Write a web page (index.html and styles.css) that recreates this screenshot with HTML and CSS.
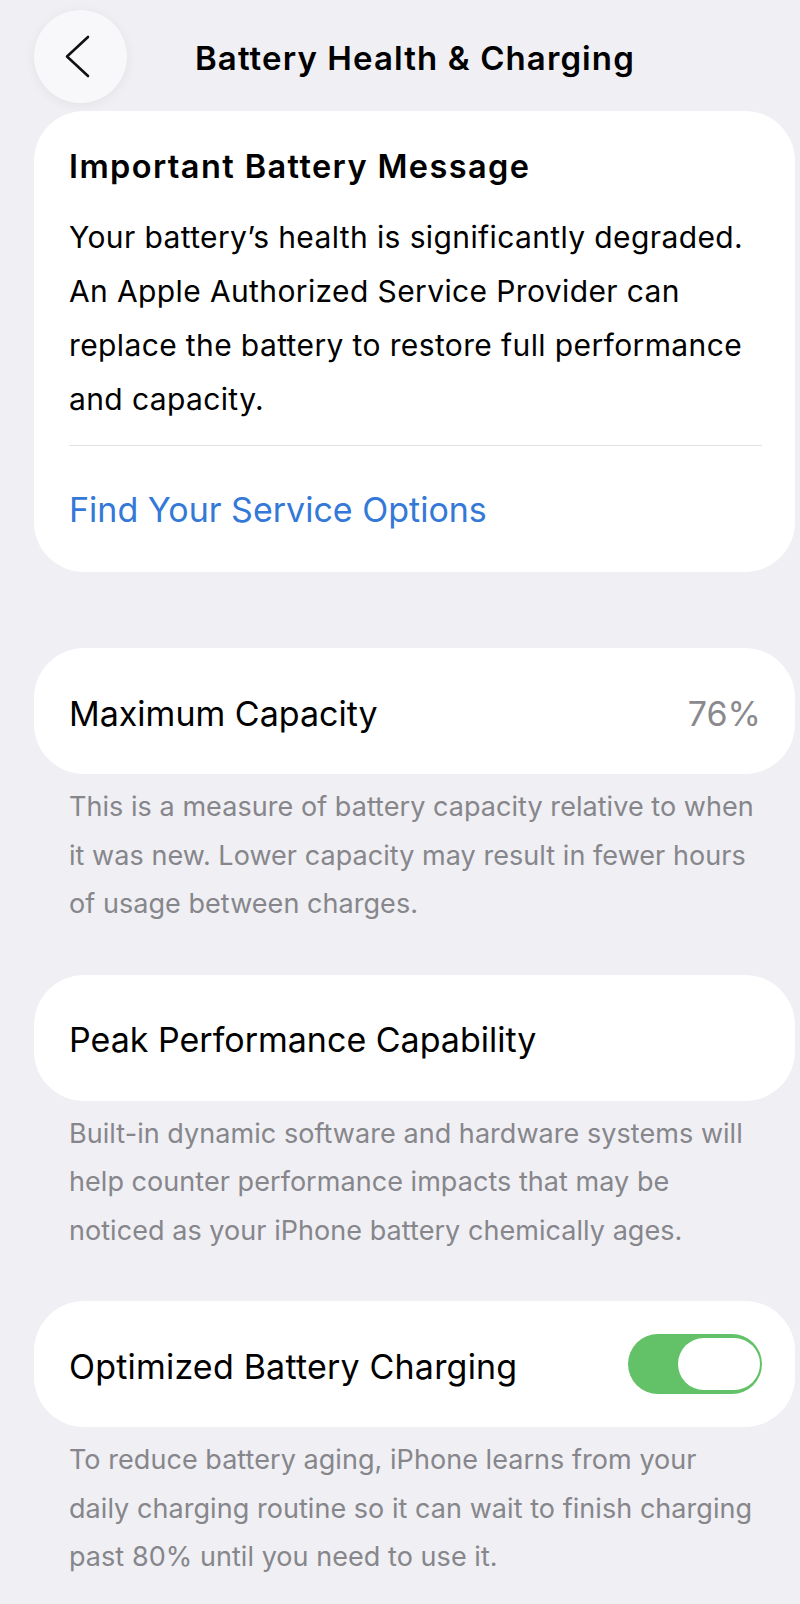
FILE: index.html
```html
<!DOCTYPE html>
<html lang="en">
<head>
<meta charset="utf-8">
<title>Battery Health &amp; Charging</title>
<link rel="stylesheet" href="styles.css">
</head>
<body>
<div class="page">
  <header class="nav">
    <div class="back">
      <svg width="93" height="93" viewBox="0 0 93 93" aria-hidden="true">
        <polyline points="54,27 33,46.5 54,66" fill="none" stroke="#111" stroke-width="2.6" stroke-linecap="round" stroke-linejoin="round"/>
      </svg>
    </div>
    <h1 class="nav-title">Battery Health &amp; Charging</h1>
  </header>

  <section class="card message">
    <h2 class="msg-title">Important Battery Message</h2>
    <p class="msg-body">Your battery’s health is significantly degraded.<br>An Apple Authorized Service Provider can<br>replace the battery to restore full performance<br>and capacity.</p>
    <div class="divider"></div>
    <a class="link">Find Your Service Options</a>
  </section>

  <section class="group first">
    <div class="card row">
      <span class="label">Maximum Capacity</span>
      <span class="value">76%</span>
    </div>
    <p class="footer">This is a measure of battery capacity relative to when<br>it was new. Lower capacity may result in fewer hours<br>of usage between charges.</p>
  </section>

  <section class="group">
    <div class="card row">
      <span class="label">Peak Performance Capability</span>
    </div>
    <p class="footer">Built-in dynamic software and hardware systems will<br>help counter performance impacts that may be<br>noticed as your iPhone battery chemically ages.</p>
  </section>

  <section class="group">
    <div class="card row">
      <span class="label wide">Optimized Battery Charging</span>
      <div class="toggle"><div class="knob"></div></div>
    </div>
    <p class="footer">To reduce battery aging, iPhone learns from your<br>daily charging routine so it can wait to finish charging<br>past 80% until you need to use it.</p>
  </section>
</div>
</body>
</html>
```

FILE: styles.css
```css
html, body {
  margin: 0;
  padding: 0;
  background: #efeff4;
}
body {
  font-family: Inter, "Noto Sans", "Liberation Sans", sans-serif;
  color: #000;
  -webkit-font-smoothing: antialiased;
}
.page {
  width: 800px;
  height: 1604px;
  overflow: hidden;
  display: flex;
  flex-direction: column;
}
.nav {
  display: flex;
  align-items: flex-start;
  padding: 10px 0 0 34px;
  height: 111px;
  box-sizing: border-box;
}
.back {
  width: 93px;
  height: 93px;
  border-radius: 50%;
  background: #f8f8fa;
  box-shadow: 0 2px 12px rgba(0, 0, 0, 0.06);
  flex: none;
}
.back svg { display: block; }
.nav-title {
  margin: 0 0 0 68px;
  font-size: 33px;
  font-weight: 600;
  line-height: 96px;
  letter-spacing: 1.1px;
}
.card {
  background: #fff;
  margin-left: 34px;
  width: 761px;
  box-sizing: border-box;
  border-radius: 50px;
}
.message {
  padding: 38px 33px 41px 35px;
}
.msg-title {
  margin: 0;
  font-size: 32.5px;
  font-weight: 600;
  line-height: 36px;
  letter-spacing: 1.4px;
}
.msg-body {
  margin: 25px 0 0;
  font-size: 30px;
  line-height: 54px;
  letter-spacing: 0.38px;
  white-space: nowrap;
}
.divider {
  height: 1px;
  background: #e2e2e6;
  margin-top: 19px;
}
.link {
  display: block;
  margin-top: 43px;
  font-size: 34px;
  line-height: 42px;
  color: #3478d8;
  letter-spacing: 0;
}
.group {
  margin-top: 46px;
  display: flex;
  flex-direction: column;
}
.group.first { margin-top: 76px; }
.row {
  height: 126px;
  display: flex;
  align-items: center;
  justify-content: space-between;
  padding: 5px 33px 0 35px;
}
.label {
  font-size: 34px;
  line-height: 42px;
  letter-spacing: 0;
}
.label.wide { letter-spacing: 0.2px; }
.value {
  font-size: 34px;
  line-height: 42px;
  color: #8a8a8e;
  letter-spacing: 0;
  margin-right: 1px;
}
.footer {
  margin: 9px 0 0 69px;
  font-size: 27px;
  line-height: 48.5px;
  color: #86868b;
  letter-spacing: 0.05px;
  white-space: nowrap;
}
.toggle {
  width: 134px;
  height: 60px;
  border-radius: 30px;
  background: #63c268;
  display: flex;
  justify-content: flex-end;
  align-items: center;
  padding: 0 2px;
  box-sizing: border-box;
  margin-top: -5px;
}
.knob {
  width: 82px;
  height: 52px;
  border-radius: 26px;
  background: #fff;
}
```
